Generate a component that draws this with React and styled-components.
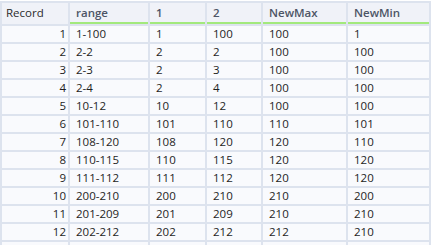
import React from "react";
import styled, { createGlobalStyle } from "styled-components";

const Global = createGlobalStyle`
  body {
    margin: 0;
    background: #fff;
    font-family: "Open Sans", "Noto Sans", sans-serif;
  }
`;

const Frame = styled.div`
  height: 245px;
  overflow: hidden;
`;

const Grid = styled.div`
  display: grid;
  grid-template-columns: 66px 78px 55px 54px 83px 81px;
  grid-template-rows: 21px;
  grid-auto-rows: 16px;
  gap: 2px;
  padding: 2px;
  margin-top: 1px;
  width: fit-content;
  background: #dde3ee;
`;

const Row = styled.div`
  display: contents;
`;

const HeadCell = styled.div`
  box-sizing: border-box;
  background: #f0f2f8;
  border-bottom: ${(p) => (p.$plain ? "none" : "2px solid #a3e97c")};
  padding-left: ${(p) => (p.$plain ? "4px" : "6px")};
  font-size: 11.5px;
  font-weight: ${(p) => (p.$plain ? 400 : 600)};
  color: ${(p) => (p.$plain ? "#2b2b2b" : "#4d5566")};
  line-height: 19px;
  white-space: nowrap;
`;

const Cell = styled.div`
  background: #f9fafd;
  font-size: 11.5px;
  color: #1e1e1e;
  line-height: 16px;
  white-space: nowrap;
  padding: ${(p) => (p.$right ? "0 2px 0 0" : "0 0 0 6px")};
  text-align: ${(p) => (p.$right ? "right" : "left")};
`;

const columns = ["range", "1", "2", "NewMax", "NewMin"];

const rows = [
  ["1-100", "1", "100", "100", "1"],
  ["2-2", "2", "2", "100", "100"],
  ["2-3", "2", "3", "100", "100"],
  ["2-4", "2", "4", "100", "100"],
  ["10-12", "10", "12", "100", "100"],
  ["101-110", "101", "110", "110", "101"],
  ["108-120", "108", "120", "120", "110"],
  ["110-115", "110", "115", "120", "120"],
  ["111-112", "111", "112", "120", "120"],
  ["200-210", "200", "210", "210", "200"],
  ["201-209", "201", "209", "210", "210"],
  ["202-212", "202", "212", "212", "210"],
];

export default function App() {
  return (
    <Frame>
      <Global />
      <Grid>
        <Row>
          <HeadCell $plain>Record</HeadCell>
          {columns.map((c) => (
            <HeadCell key={c}>{c}</HeadCell>
          ))}
        </Row>
        {rows.map((r, i) => (
          <Row key={i}>
            <Cell $right>{i + 1}</Cell>
            {r.map((v, j) => (
              <Cell key={j}>{v}</Cell>
            ))}
          </Row>
        ))}
        <Row>
          {columns.concat("").map((_, j) => (
            <Cell key={j} />
          ))}
        </Row>
      </Grid>
    </Frame>
  );
}
